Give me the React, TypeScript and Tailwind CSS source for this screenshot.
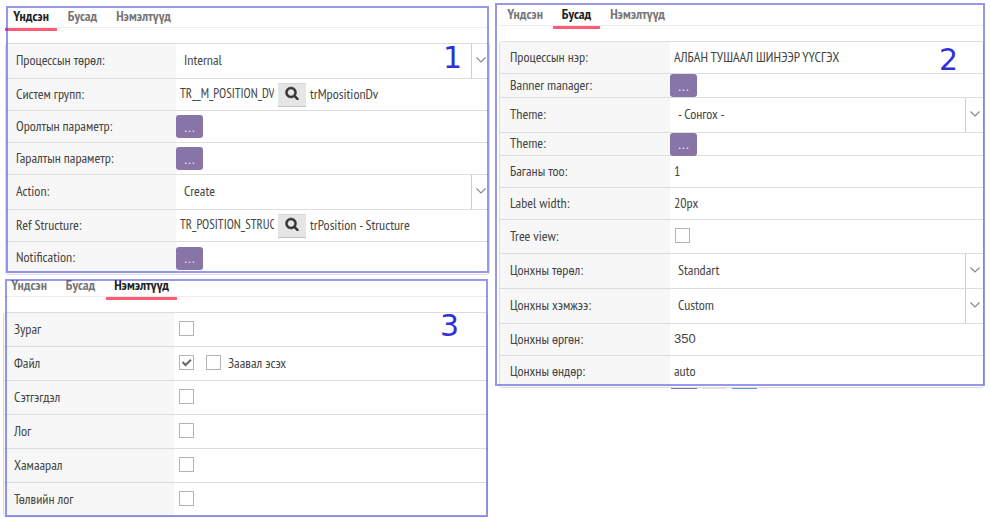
import { useId, useState, type ReactNode } from "react";

const TABS = [
  { name: "Үндсэн", width: "w-[52px]" },
  { name: "Бусад", width: "w-[47px]" },
  { name: "Нэмэлтүүд", width: "w-[71px]" },
];

function Tabs({ initial, height }: { initial: number; height: string }) {
  const [active, setActive] = useState(initial);
  return (
    <nav className={`flex items-end gap-[2px] border-b border-[#ececec] ${height}`}>
      {TABS.map((tab, i) => (
        <button
          key={tab.name}
          type="button"
          onClick={() => setActive(i)}
          className={`-mb-1 shrink-0 whitespace-nowrap border-b-[3px] pb-[2px] text-center text-[14px] leading-5 font-bold ${tab.width} ${
            i === active ? "border-[#ff5b77] text-[#222222]" : "border-transparent text-[#777777]"
          }`}
        >
          {tab.name}
        </button>
      ))}
    </nav>
  );
}

function Panel({
  number,
  tab,
  header,
  className,
  frame,
  badge,
  children,
}: {
  number: number;
  tab: number;
  header: string;
  className: string;
  frame: string;
  badge: string;
  children: ReactNode;
}) {
  return (
    <section className={`relative ${className}`}>
      <Tabs initial={tab} height={header} />
      <div className="mt-[15px] rounded-[3px] border border-[#dddddd]">{children}</div>
      <div className={`pointer-events-none absolute border-2 border-[#3030d8]/50 ${frame}`} />
      <span
        className={`pointer-events-none absolute font-['DejaVu_Sans',sans-serif] text-[30px] leading-9 text-[#3030d8] ${badge}`}
      >
        {number}
      </span>
    </section>
  );
}

function Row({
  label,
  height = "h-8",
  children,
}: {
  label: string;
  height?: string;
  children: (id: string) => ReactNode;
}) {
  const id = useId();
  return (
    <div className={`flex border-b border-[#dddddd] last:border-b-0 ${height}`}>
      <label htmlFor={id} className="flex w-[170px] shrink-0 items-center bg-[#f7f7f7] pb-[2px] pl-[10px]">
        {label}
      </label>
      <div className="flex min-w-0 flex-1 items-center">{children(id)}</div>
    </div>
  );
}

function More({ id }: { id: string }) {
  return (
    <button
      id={id}
      type="button"
      className="h-[23px] w-[27px] rounded-[3px] bg-[#8775a7] pb-[2px] text-center font-['Open_Sans',sans-serif] text-[16px] leading-5 font-light text-white"
    >
      ...
    </button>
  );
}

function Pick({ id, value }: { id: string; value: string }) {
  return (
    <div className="relative flex h-full w-full">
      <select id={id} className="min-w-0 flex-1 appearance-none bg-transparent pr-5 pb-[2px] pl-2 outline-none">
        <option>{value}</option>
      </select>
      <span className="pointer-events-none absolute inset-y-0 right-0 flex w-[18px] items-center justify-center border-l border-[#cccccc] pb-[2px]">
        <svg width="10" height="6" viewBox="0 0 10 6" fill="none" stroke="#888888" strokeWidth="1.2">
          <path d="M0.5 0.5 5 5 9.5 0.5" />
        </svg>
      </span>
    </div>
  );
}

function Text({ id, value, className = "" }: { id: string; value: string; className?: string }) {
  return (
    <input
      id={id}
      type="text"
      defaultValue={value}
      className={`w-full min-w-0 bg-transparent pb-[2px] pl-1 outline-none ${className}`}
    />
  );
}

function Lookup({ id, code, name }: { id: string; code: string; name: string }) {
  return (
    <div className="flex items-center gap-1">
      <input
        id={id}
        type="text"
        defaultValue={code}
        className="w-[98px] bg-transparent pb-[2px] pl-1 text-[13px] outline-none"
      />
      <button
        type="button"
        aria-label={name}
        className="flex h-6 w-7 items-center justify-center border-y border-t-[#d8d8d8] border-b-[#c4c4c4] bg-[#e5e5e5] pb-[4px]"
      >
        <svg width="14" height="14" viewBox="0 0 1792 1792" fill="#333333" stroke="#333333" strokeWidth="60">
          <path d="M1216 832q0-185-131.5-316.5t-316.5-131.5-316.5 131.5-131.5 316.5 131.5 316.5 316.5 131.5 316.5-131.5 131.5-316.5zm512 832q0 52-38 90t-90 38q-54 0-90-38l-343-342q-179 124-399 124-143 0-273.5-55.5t-225-150-150-225-55.5-273.5 55.5-273.5 150-225 225-150 273.5-55.5 273.5 55.5 225 150 150 225 55.5 273.5q0 220-124 399l343 343q37 37 37 90z" />
        </svg>
      </button>
      <span className="pb-[2px] whitespace-nowrap">{name}</span>
    </div>
  );
}

function Check({ id, checked = false }: { id: string; checked?: boolean }) {
  return (
    <span className="relative flex">
      <input
        id={id}
        type="checkbox"
        defaultChecked={checked}
        className="peer h-[15px] w-[15px] appearance-none border border-[#b4b4b4] bg-white"
      />
      <svg
        className="pointer-events-none absolute inset-0 hidden peer-checked:block"
        width="15"
        height="15"
        viewBox="0 0 15 15"
        fill="none"
        stroke="#666666"
        strokeWidth="2"
      >
        <path d="M3.5 7 6.5 10 12 4.8" />
      </svg>
    </span>
  );
}

const EXTRAS = ["Сэтгэгдэл", "Лог", "Хамаарал"];

export default function App() {
  const requiredId = useId();
  return (
    <main className="grid grid-cols-1 items-start bg-white font-['PT_Sans_Narrow','Liberation_Sans_Narrow','Roboto_Condensed','Noto_Sans',sans-serif] text-[14px] leading-5 text-[#444444] md:grid-cols-2">
      <div className="flex flex-col">
        <Panel
          number={1}
          tab={0}
          header="h-7"
          className="mr-[5px] ml-[5px]"
          frame="top-[6px] right-px bottom-[2px] left-px"
          badge="top-[40px] right-[28px]"
        >
          <Row label="Процессын төрөл:" height="h-[35px]">{(id) => <Pick id={id} value="Internal" />}</Row>
          <Row label="Систем групп:">{(id) => <Lookup id={id} code="TR__M_POSITION_DV" name="trMpositionDv" />}</Row>
          <Row label="Оролтын параметр:">{(id) => <More id={id} />}</Row>
          <Row label="Гаралтын параметр:">{(id) => <More id={id} />}</Row>
          <Row label="Action:" height="h-[35px]">{(id) => <Pick id={id} value="Create" />}</Row>
          <Row label="Ref Structure:">
            {(id) => <Lookup id={id} code="TR_POSITION_STRUCTURE" name="trPosition - Structure" />}
          </Row>
          <Row label="Notification:">{(id) => <More id={id} />}</Row>
        </Panel>

        <Panel
          number={3}
          tab={2}
          header="h-[22px]"
          className="mr-[7px] ml-[3px]"
          frame="top-[4px] right-0 bottom-0 left-[2px]"
          badge="top-[33px] right-[29px]"
        >
          <Row label="Зураг" height="h-[34px]">
            {(id) => (
              <div className="pb-[2px] pl-[5px]">
                <Check id={id} />
              </div>
            )}
          </Row>
          <Row label="Файл" height="h-[34px]">
            {(id) => (
              <div className="flex items-center gap-3 pb-[2px] pl-[5px]">
                <Check id={id} checked />
                <div className="flex items-center gap-[7px]">
                  <Check id={requiredId} />
                  <label htmlFor={requiredId}>Заавал эсэх</label>
                </div>
              </div>
            )}
          </Row>
          {EXTRAS.map((label) => (
            <Row key={label} label={label} height="h-[34px]">
              {(id) => (
                <div className="pb-[2px] pl-[5px]">
                  <Check id={id} />
                </div>
              )}
            </Row>
          ))}
          <Row label="Төлвийн лог" height="h-[33px]">
            {(id) => (
              <div className="pb-[2px] pl-[5px]">
                <Check id={id} />
              </div>
            )}
          </Row>
        </Panel>
      </div>

      <div className="flex flex-col">
        <Panel
          number={2}
          tab={1}
          header="h-[26px]"
          className="mr-[6px] ml-[4px]"
          frame="top-[3px] -right-px bottom-[2px] -left-1"
          badge="top-[42px] right-[26px]"
        >
          <Row label="Процессын нэр:">{(id) => <Text id={id} value="АЛБАН ТУШААЛ ШИНЭЭР ҮҮСГЭХ" />}</Row>
          <Row label="Banner manager:" height="h-6">{(id) => <More id={id} />}</Row>
          <Row label="Theme:" height="h-[35px]">{(id) => <Pick id={id} value="- Сонгох -" />}</Row>
          <Row label="Theme:" height="h-[23px]">{(id) => <More id={id} />}</Row>
          <Row label="Баганы тоо:">{(id) => <Text id={id} value="1" />}</Row>
          <Row label="Label width:">{(id) => <Text id={id} value="20px" />}</Row>
          <Row label="Tree view:" height="h-[34px]">
            {(id) => (
              <div className="pb-[2px] pl-[5px]">
                <Check id={id} />
              </div>
            )}
          </Row>
          <Row label="Цонхны төрөл:" height="h-[35px]">{(id) => <Pick id={id} value="Standart" />}</Row>
          <Row label="Цонхны хэмжээ:" height="h-[35px]">{(id) => <Pick id={id} value="Custom" />}</Row>
          <Row label="Цонхны өргөн:">
            {(id) => <Text id={id} value="350" className="font-['Liberation_Sans',sans-serif] text-[13px]" />}
          </Row>
          <Row label="Цонхны өндөр:" height="h-[31px]">{(id) => <Text id={id} value="auto" />}</Row>
        </Panel>
        <div className="ml-[176px] flex h-px gap-[6px]">
          <span className="w-[26px] bg-[#8775a7]" />
          <span className="w-[23px] bg-[#e5e5e5]" />
          <span className="w-[25px] bg-[#5b9bd1]" />
        </div>
      </div>
    </main>
  );
}
